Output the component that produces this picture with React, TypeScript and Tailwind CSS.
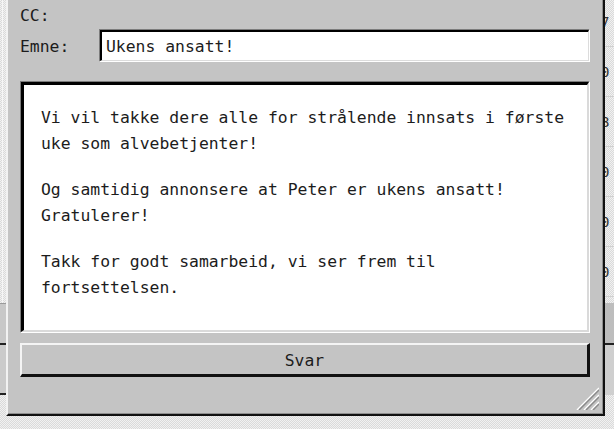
import React from "react";

const mono = "font-['DejaVu_Sans_Mono','Liberation_Mono',monospace]";

const PARAGRAPHS = [
  "Vi vil takke dere alle for strålende innsats i første uke som alvebetjenter!",
  "Og samtidig annonsere at Peter er ukens ansatt! Gratulerer!",
  "Takk for godt samarbeid, vi ser frem til fortsettelsen.",
];

// digits of the list window that peek out behind the dialog
const ROW_DIGITS = ["7", "0", "8", "0", "0", "0"];

function LeftStrip() {
  return (
    <div className="w-[6px] h-full flex flex-col">
      <div className="h-[303px] border-l-[2px] border-l-transparent">
        <div className="w-px h-full bg-[#f6f6f6]" />
      </div>
      <div className="h-[40px] bg-[#c8c8c8] border-t border-[#9a9a9a]" />
      <div className="h-[2px] bg-[#222]" />
      <div className="h-[48px] bg-[#cbcbcb]" />
      <div className="h-[2px] bg-[#222]" />
    </div>
  );
}

function RightStrip() {
  return (
    <div className="w-[9px] h-full flex flex-col -mt-[3px] overflow-hidden">
      {ROW_DIGITS.map((d, i) => (
        <div key={i} className="h-[50px] flex items-center border-b border-[#d0d0d0] shrink-0">
          <span className={`${mono} -ml-[4px] text-[14px] leading-[16px] text-[#333]`}>{d}</span>
        </div>
      ))}
      <div className="h-[6px] shrink-0" />
      <div className="h-[42px] bg-[#bdbdbd] border-b-2 border-[#222] shrink-0" />
      <div className="h-[50px] bg-[#cfcfcf] shrink-0" />
    </div>
  );
}

function ResizeGrip() {
  return (
    <svg width="26" height="24" viewBox="0 0 26 24" className="absolute right-[4px] bottom-[4px]">
      {[0, 7, 14].map((o) => (
        <g key={o}>
          <line x1={4 + o} y1={24} x2={26} y2={2 + o} stroke="#ffffff" strokeWidth="1.5" />
          <line x1={6 + o} y1={24} x2={26} y2={4 + o} stroke="#8a8a8a" strokeWidth="1.5" />
        </g>
      ))}
    </svg>
  );
}

// sunken field: grey/black top-left, light bottom-right
function Sunken({ className, children }: { className?: string; children: React.ReactNode }) {
  return (
    <div className={`border-t border-l border-[#7c7c7c] border-b border-r border-b-white border-r-white ${className ?? ""}`}>
      {children}
    </div>
  );
}

export default function App() {
  return (
    <div className="relative w-[614px] h-[429px] overflow-hidden flex justify-between bg-[repeating-conic-gradient(#dadada_0_25%,#f1f1f1_0_50%)] bg-[length:2px_2px]">
      <LeftStrip />
      <RightStrip />

      {/* Dialog window */}
      <div
        className={`${mono} absolute left-[6px] top-[-4px] w-[599px] h-[420px] bg-[#c4c4c4] text-[#1c1c1c] border-l-2 border-l-[#f2f2f2] border-r-2 border-r-[#111] border-b-2 border-b-[#111]`}
      >
        <div className="h-full border-r border-b border-[#8e8e8e] flex flex-col px-[12px] pt-[10px]">
          {/* CC */}
          <div className="h-[20px] flex items-center text-[16.4px] leading-[20px]">CC:</div>

          {/* Emne */}
          <div className="mt-[3px] flex items-center">
            <span className="w-[80px] text-[16.4px] leading-[20px] pt-[2px]">Emne:</span>
            <Sunken className="flex-1 h-[33px] -ml-px">
              <div className="h-full bg-white border-t-2 border-l-2 border-black border-b border-r border-b-[#dcdcdc] border-r-[#dcdcdc] flex items-center pl-[4px] text-[16.4px] leading-[20px] pt-[2px]">
                Ukens ansatt!
              </div>
            </Sunken>
          </div>

          {/* Message body */}
          <Sunken className="mt-[19px] h-[252px]">
            <div className="h-full bg-white border-t-[3px] border-l-[3px] border-black border-b-2 border-r-2 border-b-[#dadada] border-r-[#dadada] pl-[17px] pt-[20px]">
              <div className="w-[532px] flex flex-col gap-[20px] text-[16.4px] leading-[26px]">
                {PARAGRAPHS.map((p) => (
                  <p key={p}>{p}</p>
                ))}
              </div>
            </div>
          </Sunken>

          {/* Reply button */}
          <button className="mt-[10px] h-[34px] w-full bg-[#c4c4c4] border-t-2 border-l-2 border-[#f4f4f4] border-b-[3px] border-r-[3px] border-b-[#111] border-r-[#111] text-[16.4px] leading-[20px] text-[#1c1c1c] pt-[2px]">
            Svar
          </button>
        </div>
        <ResizeGrip />
      </div>
    </div>
  );
}
